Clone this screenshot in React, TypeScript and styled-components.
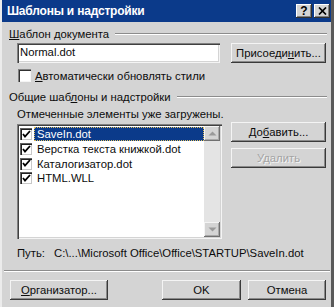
import * as React from 'react';
import styled, { createGlobalStyle } from 'styled-components';

const GlobalStyle = createGlobalStyle`
  html, body {
    margin: 0;
    padding: 0;
    background: #d4d4d4;
  }
  body {
    font-family: 'Liberation Sans', Arial, sans-serif;
    font-size: 11.3px;
    color: #0c0c0c;
  }
`

const items = [
  { name: 'SaveIn.dot', selected: true },
  { name: 'Верстка текста книжкой.dot', selected: false },
  { name: 'Каталогизатор.dot', selected: false },
  { name: 'HTML.WLL', selected: false },
];

const CheckMark = () => (
  <svg width="9" height="9" viewBox="0 0 9 9">
    <path d="M1 4 L3 6.5 L8 1" fill="none" stroke="#000" strokeWidth={1.8} />
  </svg>
);

const Arrow = ({ up }: { up?: boolean }) => (
  <svg width="9" height="5" viewBox="0 0 9 5">
    <path d={up ? 'M0.5 4.5 L4.5 0.5 L8.5 4.5 Z' : 'M0.5 0.5 L4.5 4.5 L8.5 0.5 Z'} fill="#9a9a9a" />
  </svg>
);

export default function App() {
  return (
    <>
      <GlobalStyle />
      <Window>
        <TitleBar>
          <Title>Шаблоны и надстройки</Title>
          <TitleButtons>
            <TitleButton>?</TitleButton>
            <TitleButton>
              <svg width="9" height="8" viewBox="0 0 9 8">
                <path d="M1 0.5 L8 7.5 M8 0.5 L1 7.5" stroke="#000" strokeWidth={1.7} />
              </svg>
            </TitleButton>
          </TitleButtons>
        </TitleBar>
        <Body>
          <GroupHeader>
            <span><u>Ш</u>аблон документа</span>
            <GroupLine />
          </GroupHeader>
          <Row>
            <Indent>
              <TextInput>Normal.dot</TextInput>
            </Indent>
            <Button width={95}>Присоеди<u>н</u>ить...</Button>
          </Row>
          <CheckRow>
            <CheckBox />
            <span><u>А</u>втоматически обновлять стили</span>
          </CheckRow>
          <GroupHeader top={8}>
            <span>Общие шаб<u>л</u>оны и надстройки</span>
            <GroupLine />
          </GroupHeader>
          <Caption>Отмеченные элементы уже загружены.</Caption>
          <Row top={1}>
            <Indent>
              <ListBox>
                <ListItems>
                  {items.map((item) => (
                    <ListItem key={item.name}>
                      <SmallCheck><CheckMark /></SmallCheck>
                      <ItemText selected={item.selected}>{item.name}</ItemText>
                    </ListItem>
                  ))}
                </ListItems>
                <ScrollBar>
                  <ScrollButton><Arrow up /></ScrollButton>
                  <ScrollTrack />
                  <ScrollButton><Arrow /></ScrollButton>
                </ScrollBar>
              </ListBox>
            </Indent>
            <ButtonColumn>
              <Button width={95}>До<u>б</u>авить...</Button>
              <Button width={95} disabled>Удалить</Button>
            </ButtonColumn>
          </Row>
          <PathRow>
            <span>Путь:</span>
            <PathValue>C:\...\Microsoft Office\Office\STARTUP\SaveIn.dot</PathValue>
          </PathRow>
          <Separator />
          <BottomRow>
            <Button width={98}><u>О</u>рганизатор...</Button>
            <RightButtons>
              <Button width={79}>OK</Button>
              <Button width={78}>Отмена</Button>
            </RightButtons>
          </BottomRow>
        </Body>
      </Window>
    </>
  )
}

const Window = styled.div`
  width: 334px;
  height: 307px;
  box-sizing: border-box;
  background: #d4d4d4;
  border-left: 2px solid #ececec;
  border-right: 3px solid #5a5a5a;
  overflow: hidden;
  u {
    text-decoration: underline;
    text-underline-offset: 1px;
  }
`
const TitleBar = styled.div`
  height: 22px;
  background: #0b3a8a;
  display: flex;
  align-items: center;
  justify-content: space-between;
  padding: 0 1px 0 5px;
`
const Title = styled.div`
  color: #fff;
  font-weight: bold;
  font-size: 12px;
  letter-spacing: -0.2px;
`
const TitleButtons = styled.div`
  display: flex;
  gap: 2px;
`
const TitleButton = styled.div`
  width: 16px;
  height: 14px;
  box-sizing: border-box;
  background: #d4d4d4;
  display: flex;
  align-items: center;
  justify-content: center;
  font-weight: bold;
  font-size: 12px;
  color: #000;
  box-shadow: inset -1px -1px #303030, inset 1px 1px #fff, inset -2px -2px #808080;
`
const Body = styled.div`
  padding: 0 5px 0 7px;
`
const GroupHeader = styled.div<{ top?: number }>`
  display: flex;
  align-items: center;
  gap: 6px;
  height: 14px;
  margin-top: ${(p) => p.top ?? 5}px;
  white-space: nowrap;
`
const GroupLine = styled.div`
  flex: 1;
  border-top: 1px solid #8c8c8c;
  border-bottom: 1px solid #fff;
  margin-right: -1px;
`
const Row = styled.div<{ top?: number }>`
  display: flex;
  justify-content: space-between;
  align-items: flex-start;
  margin-top: ${(p) => p.top ?? 2}px;
`
const Indent = styled.div`
  padding-left: 8px;
`
const TextInput = styled.div`
  width: 203px;
  height: 20px;
  box-sizing: border-box;
  background: #fff;
  padding: 3px 0 0 3px;
  box-shadow: inset 1px 1px #808080, inset 2px 2px #404040, inset -1px -1px #f4f4f4, inset -2px -2px #d4d4d4;
`
const Button = styled.div<{ width: number; disabled?: boolean }>`
  width: ${(p) => p.width}px;
  height: 20px;
  box-sizing: border-box;
  display: flex;
  align-items: center;
  justify-content: center;
  background: #d4d4d4;
  color: ${(p) => (p.disabled ? '#a4a4a4' : '#0c0c0c')};
  text-shadow: ${(p) => (p.disabled ? '1px 1px #f4f4f4' : 'none')};
  box-shadow: inset -1px -1px #3a3a3a, inset 1px 1px #f4f4f4, inset -2px -2px #8a8a8a;
  white-space: nowrap;
`
const CheckRow = styled.div`
  display: flex;
  align-items: center;
  gap: 4px;
  margin-top: 6px;
  padding-left: 9px;
`
const CheckBox = styled.div`
  width: 13px;
  height: 13px;
  box-sizing: border-box;
  background: #fff;
  box-shadow: inset 1px 1px #808080, inset 2px 2px #303030, inset -1px -1px #f4f4f4;
`
const Caption = styled.div`
  margin-top: 3px;
  padding-left: 8px;
  height: 14px;
  line-height: 14px;
`
const ListBox = styled.div`
  width: 205px;
  height: 115px;
  margin-top: 2px;
  box-sizing: border-box;
  padding: 2px;
  background: #fff;
  display: flex;
  box-shadow: inset 1px 1px #808080, inset 2px 2px #404040, inset -1px -1px #f4f4f4, inset -2px -2px #d4d4d4;
`
const ListItems = styled.div`
  flex: 1;
  padding-top: 1px;
`
const ListItem = styled.div`
  display: flex;
  align-items: center;
  height: 14.7px;
  padding-left: 1px;
`
const SmallCheck = styled.div`
  width: 12px;
  height: 12px;
  box-sizing: border-box;
  background: #fff;
  display: flex;
  align-items: center;
  justify-content: center;
  box-shadow: inset 1px 1px #606060, inset 2px 2px #202020, inset -1px -1px #c8c8c8;
`
const ItemText = styled.div<{ selected: boolean }>`
  flex: 1;
  margin-left: 2px;
  padding-left: 3px;
  height: 14px;
  line-height: 14px;
  box-sizing: border-box;
  background: ${(p) => (p.selected ? '#0b3a8a' : 'transparent')};
  color: ${(p) => (p.selected ? '#fff' : '#0c0c0c')};
  outline: ${(p) => (p.selected ? '1px dotted #e0c060' : 'none')};
  outline-offset: -1px;
  white-space: nowrap;
`
const ScrollBar = styled.div`
  width: 16px;
  display: flex;
  flex-direction: column;
  background: #e4e4e4;
`
const ScrollButton = styled.div`
  width: 16px;
  height: 15px;
  box-sizing: border-box;
  display: flex;
  align-items: center;
  justify-content: center;
  background: #d4d4d4;
  box-shadow: inset -1px -1px #707070, inset 1px 1px #f4f4f4, inset -2px -2px #a8a8a8;
`
const ScrollTrack = styled.div`
  flex: 1;
`
const ButtonColumn = styled.div`
  display: flex;
  flex-direction: column;
  gap: 6px;
`
const PathRow = styled.div`
  display: flex;
  gap: 9px;
  margin-top: 7px;
  padding-left: 8px;
  height: 14px;
  line-height: 14px;
  white-space: nowrap;
`
const PathValue = styled.span``
const Separator = styled.div`
  margin: 10px -4px 0 -5px;
  border-top: 1px solid #8c8c8c;
  border-bottom: 1px solid #fff;
`
const BottomRow = styled.div`
  display: flex;
  justify-content: space-between;
  margin-top: 8px;
  padding-left: 1px;
`
const RightButtons = styled.div`
  display: flex;
  gap: 7px;
`
